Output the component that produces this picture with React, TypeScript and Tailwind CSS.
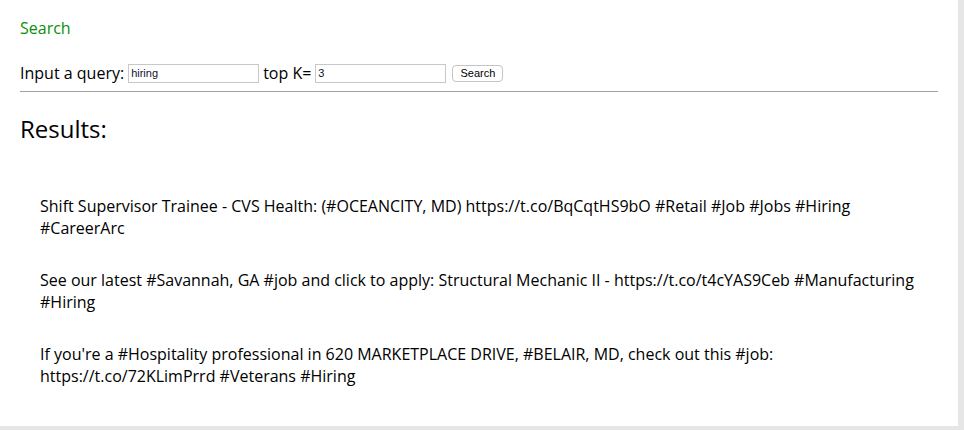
import React from "react";

const results = [
  "Shift Supervisor Trainee - CVS Health: (#OCEANCITY, MD) https://t.co/BqCqtHS9bO #Retail #Job #Jobs #Hiring #CareerArc",
  "See our latest #Savannah, GA #job and click to apply: Structural Mechanic II - https://t.co/t4cYAS9Ceb #Manufacturing #Hiring",
  "If you're a #Hospitality professional in 620 MARKETPLACE DRIVE, #BELAIR, MD, check out this #job: https://t.co/72KLimPrrd #Veterans #Hiring",
];

export default function App() {
  return (
    <div className="w-[964px] h-[430px] bg-[#e6e6e6] overflow-hidden">
      <div
        className="w-[958px] h-[426px] bg-white px-5 pt-[17px] text-black"
        style={{ fontFamily: '"Open Sans", sans-serif' }}
      >
        <div className="text-[16px] leading-[22px] text-[#0a8f0a]">Search</div>
        <div className="mt-[23px] flex items-center h-[22px] text-[16px] leading-[22px]">
          <span>Input a query:</span>
          <input
            defaultValue="hiring"
            className="ml-[4px] w-[131px] h-[19px] border border-[#c8c8c8] px-[2px] text-[11px] text-[#111133] outline-none"
            style={{ fontFamily: '"Liberation Sans", Arial, sans-serif' }}
          />
          <span className="ml-[4px]">top K=</span>
          <input
            defaultValue="3"
            className="ml-[4px] w-[131px] h-[19px] border border-[#c8c8c8] px-[2px] text-[11px] text-[#111133] outline-none"
            style={{ fontFamily: '"Liberation Sans", Arial, sans-serif' }}
          />
          <button
            className="ml-[6px] w-[51px] h-[17px] border border-[#c4c4c4] rounded-[4px] bg-white text-[11px] leading-none text-black"
            style={{ fontFamily: '"Liberation Sans", Arial, sans-serif' }}
          >
            Search
          </button>
        </div>
        <hr className="mt-[7px] border-0 border-t border-[#a0a0a0]" />
        <div className="mt-[20px] text-[24px] leading-[33px]">Results:</div>
        <div className="mt-[50px] pl-5 flex flex-col gap-[30px] text-[16px] leading-[22px]">
          {results.map((r, i) => (
            <p key={i}>{r}</p>
          ))}
        </div>
      </div>
    </div>
  );
}
